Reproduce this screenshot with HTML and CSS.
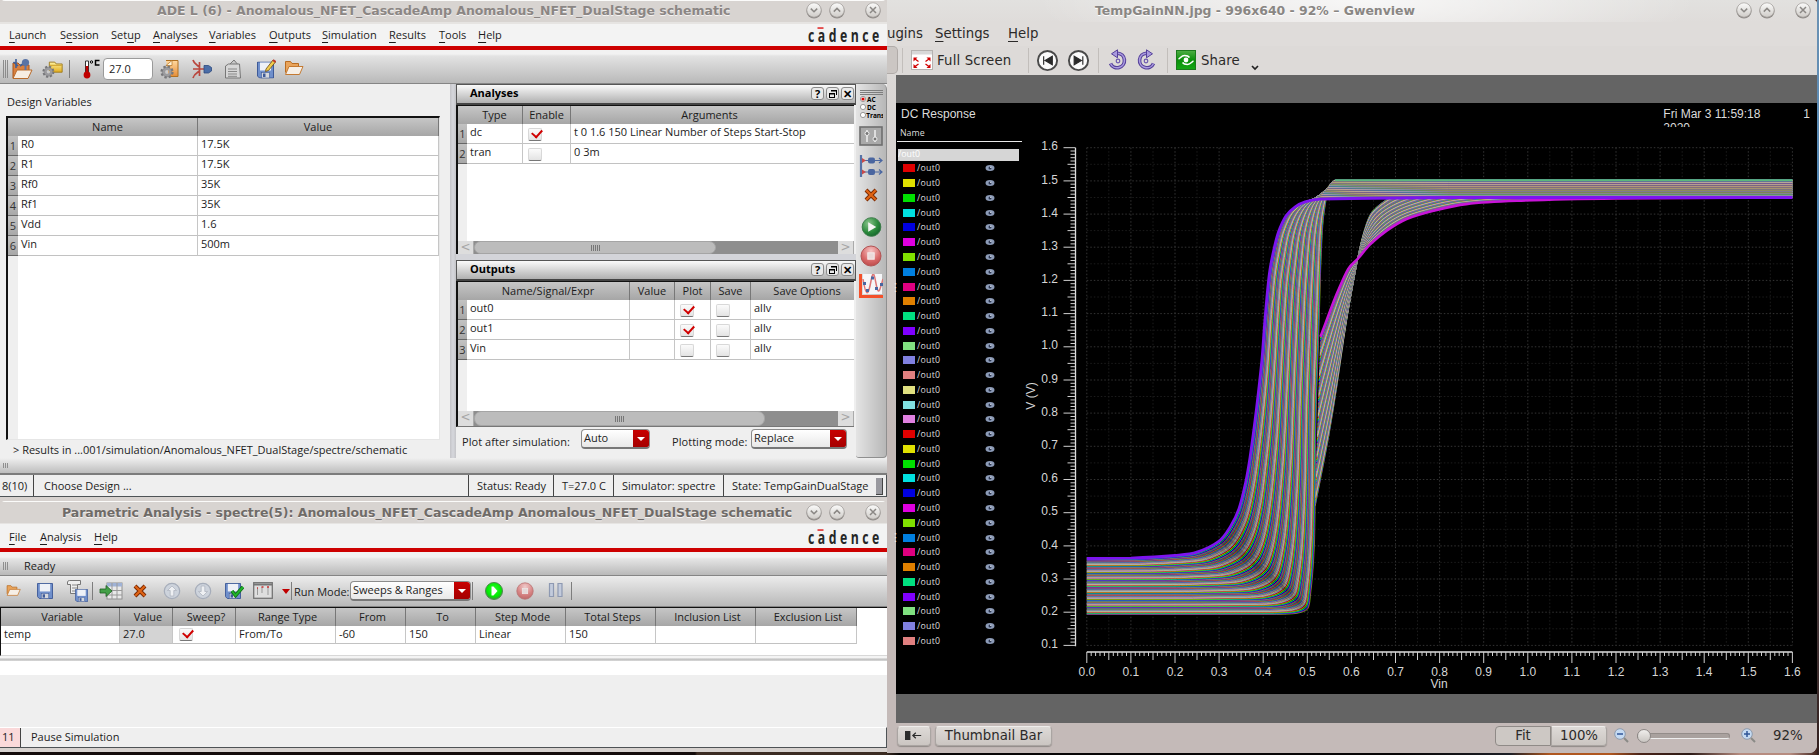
FILE: index.html
```
<!DOCTYPE html>
<html lang="en">
<head>
<meta charset="utf-8">
<title>ADE L - Virtuoso desktop</title>
<link rel="stylesheet" href="styles.css">
</head>
<body>
<svg class="defs" aria-hidden="true">
  <defs>
    <linearGradient id="gBtn" x1="0" y1="0" x2="0" y2="1"><stop offset="0" stop-color="#fbfbfa"/><stop offset="1" stop-color="#cfccc8"/></linearGradient>
    <linearGradient id="gYellow" x1="0" y1="0" x2="0" y2="1"><stop offset="0" stop-color="#fff3a0"/><stop offset="1" stop-color="#e2ac1e"/></linearGradient>
    <linearGradient id="gOrange" x1="0" y1="0" x2="0" y2="1"><stop offset="0" stop-color="#ffd9a0"/><stop offset="1" stop-color="#e58d38"/></linearGradient>
    <radialGradient id="gGreen" cx=".35" cy=".3" r=".8"><stop offset="0" stop-color="#8ac48c"/><stop offset=".6" stop-color="#2b8a3c"/><stop offset="1" stop-color="#12602a"/></radialGradient>
    <radialGradient id="gLime" cx=".5" cy=".4" r=".6"><stop offset="0" stop-color="#2cff2c"/><stop offset=".7" stop-color="#00ea00"/><stop offset="1" stop-color="#3d8f3d"/></radialGradient>
    <radialGradient id="gRed" cx=".5" cy=".25" r=".8"><stop offset="0" stop-color="#f6c5c5"/><stop offset=".6" stop-color="#d96a6a"/><stop offset="1" stop-color="#b84545"/></radialGradient>
    <linearGradient id="gShare" x1="0" y1="0" x2="0" y2="1"><stop offset="0" stop-color="#4fae45"/><stop offset=".5" stop-color="#0a8f0a"/><stop offset="1" stop-color="#15a815"/></linearGradient>
  </defs>
  <symbol id="wDown" viewBox="0 0 18 18"><circle cx="9" cy="9.8" r="7.6" fill="#8f8b88"/><circle cx="9" cy="9" r="7.2" fill="url(#gBtn)" stroke="#a29e9b" stroke-width=".7"/><path d="M5.8 7.6L9 10.8l3.200-3.200" fill="none" stroke="#8b8885" stroke-width="1.500"/></symbol>
  <symbol id="wUp" viewBox="0 0 18 18"><circle cx="9" cy="9.8" r="7.6" fill="#8f8b88"/><circle cx="9" cy="9" r="7.2" fill="url(#gBtn)" stroke="#a29e9b" stroke-width=".7"/><path d="M5.800 10.600L9 7.400l3.200 3.200" fill="none" stroke="#8b8885" stroke-width="1.500"/></symbol>
  <symbol id="wClose" viewBox="0 0 18 18"><circle cx="9" cy="9.8" r="7.6" fill="#8f8b88"/><circle cx="9" cy="9" r="7.2" fill="url(#gBtn)" stroke="#a29e9b" stroke-width=".7"/><path d="M6 6l6 6M12 6l-6 6" stroke="#8b8885" stroke-width="1.500"/></symbol>
  <symbol id="gear" viewBox="0 0 14 14"><circle cx="7" cy="7" r="5.300" fill="none" stroke="#77777a" stroke-width="2.600" stroke-dasharray="2.300 1.860"/><circle cx="7" cy="7" r="3.300" fill="none" stroke="#9b9b9e" stroke-width="2.800"/><circle cx="7" cy="7" r="4.800" fill="none" stroke="#77777a" stroke-width=".6"/></symbol>
  <symbol id="folder" viewBox="0 0 20 16"><path d="M1.500 12.500v-11h5l1.500 2h6.500v3" fill="#e9a45b" stroke="#b96c22"/><path d="M1.500 14.500L5 6.500h14l-3.500 8z" fill="#f6efe6" stroke="#c47a32"/></symbol>
  <symbol id="floppy" viewBox="0 0 17 17"><path d="M.5 .5h16v16H2.500l-2-2z" fill="#6f8fcb" stroke="#3e5a98"/><rect x="3" y="1" width="11" height="8" fill="#eef1f7"/><rect x="4.500" y="11" width="8" height="5.500" fill="#d5d8de" stroke="#3e5a98" stroke-width=".6"/><rect x="6" y="12" width="2.500" height="3.500" fill="#3e5a98"/></symbol>
  <symbol id="cross" viewBox="0 0 14 14"><path d="M2 2l10 10M12 2L2 12" stroke="#7a2800" stroke-width="4"/><path d="M2.300 2.300l9.400 9.400M11.700 2.300l-9.400 9.400" stroke="#e06414" stroke-width="2.200"/></symbol>
  <symbol id="stop" viewBox="0 0 22 22"><circle cx="11" cy="11" r="10" fill="url(#gRed)" stroke="#b15454"/><rect x="7.800" y="7.800" width="6.400" height="6.400" fill="#eadada" stroke="#f7eaea"/></symbol>
</svg>

<main class="desktop">

<!-- Gwenview image viewer -->
<section class="win viewer">
  <header class="v-title"><span class="v-caption">TempGainNN.jpg - 996x640 - 92% – Gwenview</span>
    <span class="wbtns"><svg><use href="#wDown"/></svg><svg><use href="#wUp"/></svg><svg class="last"><use href="#wClose"/></svg></span></header>
  <nav class="v-menu"><span>ugins</span><span><u>S</u>ettings</span><span><u>H</u>elp</span></nav>
  <div class="v-tools">
    <i class="v-pressed"></i><i class="v-sep"></i>
    <svg class="full" viewBox="0 0 22 20"><rect x=".5" y=".5" width="21" height="19" fill="#fff" stroke="#b5b2b0"/><rect x="1" y="1" width="20" height="3.500" fill="#d8d8d8"/><g fill="#d00000" stroke="#d00000" stroke-width="1.300"><path d="M2.500 7.500h4l-4 4zM19.500 7.500h-4l4 4zM2.500 18h4l-4-4zM19.500 18h-4l4-4z" stroke="none"/><path d="M4 9l3.500 2.500M18 9l-3.500 2.500M4 16.500L7.500 14M18 16.500L14.500 14"/></g></svg>
    <span class="t-full">Full Screen</span><i class="v-sep"></i>
    <svg class="nav1" viewBox="0 0 24 24"><circle cx="12" cy="12" r="10" fill="#fbfbfb" stroke="#4a4a4a" stroke-width="2"/><path d="M8 7.500v9M17 7.500v9L9.500 12z" fill="#2a2a2a" stroke="#2a2a2a" stroke-width="1.200"/></svg>
    <svg class="nav2" viewBox="0 0 24 24"><circle cx="12" cy="12" r="10" fill="#fbfbfb" stroke="#4a4a4a" stroke-width="2"/><path d="M16.500 7.500v9M7.500 7.500v9l7.500-4.500z" fill="#2a2a2a" stroke="#2a2a2a" stroke-width="1.200"/></svg>
    <i class="v-sep"></i>
    <svg class="rot1" viewBox="0 0 20 22"><path d="M9.500 4.200A7.300 7.300 0 1 1 2.500 14.500" fill="none" stroke="#55409a" stroke-width="3.600"/><path d="M9.500 4.200A7.300 7.300 0 1 1 2.500 14.500" fill="none" stroke="#a99ade" stroke-width="1.600"/><path d="M3.500 4.800L9.500 .8v8z" fill="#a99ade" stroke="#55409a"/><circle cx="10" cy="12" r="1.800" fill="none" stroke="#6d58b0" stroke-width="1.200"/></svg>
    <svg class="rot2" viewBox="0 0 20 22"><path d="M10.500 4.200A7.300 7.300 0 1 0 17.500 14.500" fill="none" stroke="#55409a" stroke-width="3.600"/><path d="M10.500 4.200A7.300 7.300 0 1 0 17.500 14.500" fill="none" stroke="#a99ade" stroke-width="1.600"/><path d="M16.500 4.800L10.500 .8v8z" fill="#a99ade" stroke="#55409a"/><circle cx="10" cy="12" r="1.800" fill="none" stroke="#6d58b0" stroke-width="1.200"/></svg>
    <i class="v-sep"></i>
    <svg class="share" viewBox="0 0 20 20"><rect x=".5" y=".5" width="19" height="19" fill="url(#gShare)" stroke="#1c7a1c"/><circle cx="10" cy="10" r="2.400" fill="#fff"/><path d="M2.500 9c1.500-.5 3-3.500 6-3.500 2 0 4 .5 5 2M17.500 11c-1.500.5-3 3.500-6 3.500-2 0-4-.5-5-2" fill="none" stroke="#fff" stroke-width="1.600"/></svg>
    <span class="t-share">Share</span>
    <svg class="chev" viewBox="0 0 8 6"><path d="M1 1l3 3 3-3" fill="none" stroke="#222" stroke-width="1.700"/></svg>
  </div>
  <div class="v-body">
    <i class="v-grip g1">⋮</i><i class="v-grip g2">⋮</i>
    <div class="photo">
      <div class="p-head"><span>DC Response</span><span class="p-date">Fri Mar 3 11:59:18<br>2020</span><span class="p-page">1</span></div>
      <div class="p-main">
        <div class="legend"><div class="l-name">Name</div><div class="l-sel">/out0</div><div id="rows"></div></div>
        <svg id="plot" class="plot" viewBox="1022 127 795 567"></svg>
      </div>
    </div>
  </div>
  <footer class="v-foot">
    <button class="b-side"><svg viewBox="0 0 20 10"><rect x="0" y="0" width="6" height="10" fill="#2b2b2b"/><path d="M8.500 5h9.500M12 2L8.700 5l3.300 3" fill="none" stroke="#2b2b2b" stroke-width="1.300"/></svg></button>
    <button class="b-thumb">Thumbnail Bar</button>
    <span class="b-zoom"><button class="b-fit">Fit</button><button class="b-100">100%</button></span>
    <svg class="mag" viewBox="0 0 15 15"><circle cx="6" cy="6" r="5.300" fill="#c5daf2" stroke="#8e9bad"/><path d="M3 6h6" stroke="#2f5597" stroke-width="1.500"/><path d="M10 10l4 4" stroke="#8a8a86" stroke-width="2"/></svg>
    <span class="slider"><i></i></span>
    <svg class="mag m2" viewBox="0 0 15 15"><circle cx="6" cy="6" r="5.300" fill="#c5daf2" stroke="#8e9bad"/><path d="M3 6h6M6 3v6" stroke="#2f5597" stroke-width="1.500"/><path d="M10 10l4 4" stroke="#8a8a86" stroke-width="2"/></svg>
    <span class="pct">92%</span>
  </footer>
</section>

<!-- ADE L -->
<section class="win ade">
  <header class="title"><span class="cap-ade">ADE L (6) - Anomalous_NFET_CascadeAmp Anomalous_NFET_DualStage schematic</span>
    <span class="wbtns"><svg><use href="#wDown"/></svg><svg><use href="#wUp"/></svg><svg class="last"><use href="#wClose"/></svg></span></header>
  <nav class="menu menu-ade"><span><u>L</u>aunch</span><span>S<u>e</u>ssion</span><span>Set<u>u</u>p</span><span><u>A</u>nalyses</span><span><u>V</u>ariables</span><span><u>O</u>utputs</span><span><u>S</u>imulation</span><span><u>R</u>esults</span><span><u>T</u>ools</span><span><u>H</u>elp</span><svg class="logo" viewBox="0 0 74 18"><text transform="translate(1 15.500) scale(.72 1)" textLength="99" class="logo-text">cadence</text><rect x="10.500" y="1.200" width="6" height="1.700" fill="#e23b3b"/></svg></nav>
  <div class="tools tools-ade">
    <i class="grip"></i>
    <svg viewBox="0 0 22 22"><path d="M2 20V5h5l2 2h9v6" fill="#d9803f" stroke="#a9541b"/><path d="M2 20.500L6 12h15l-4 8.500z" fill="#f7ede2" stroke="#b96c2c"/><path d="M5 1v9M2.500 4L7 8M9 8l4-3" stroke="#3d5f9a" stroke-width="1.600"/><circle cx="14.500" cy="4.500" r="3.600" fill="#5873a6"/><path d="M14.500 8v4" stroke="#5873a6" stroke-width="2"/></svg>
    <svg viewBox="0 0 24 22"><path d="M8 13V3.500h6l1.500 2H22v9H10" fill="url(#gYellow)" stroke="#9d7a1c"/><path d="M8.500 7h13" stroke="#c99a25"/><use href="#gear" x="0" y="7" width="14" height="14"/></svg>
    <i class="sep"></i>
    <svg viewBox="0 0 20 20"><path d="M4.500 2h3v12h-3z" fill="#fff" stroke="#333"/><path d="M6 7v8" stroke="#c00000" stroke-width="2.500"/><circle cx="6" cy="16" r="3.400" fill="#c00000"/><circle cx="10.500" cy="3" r="1.200" fill="none" stroke="#000"/><path d="M18.500 1.500h-4v4.500h4" fill="none" stroke="#000" stroke-width="1.500"/></svg>
    <span class="temp-in">27.0</span>
    <svg viewBox="0 0 20 22"><path d="M6 2.500h12v16H9" fill="url(#gOrange)" stroke="#b07020"/><path d="M12 2.500v5H6z" fill="#fff4dc" stroke="#b07020" stroke-width=".7"/><use href="#gear" x="0" y="7" width="14" height="14"/></svg>
    <svg viewBox="0 0 20 20"><path d="M1 1c1 4 4 5 6.500 7v4C5 14 2 15 1 19M1 10h6M7.500 3v14M7.500 10h5" fill="none" stroke="#b9473e" stroke-width="1.700"/><path d="M12 6.500h4.500l3 2v3.500l-3 2H12z" fill="#4b6ea8" stroke="#2d4a7d" stroke-width=".8"/></svg>
    <svg viewBox="0 0 18 20"><path d="M4 7L10 1l5 6" fill="#c8c8c8" stroke="#777"/><path d="M1.500 19V7l3-2h11l1 14z" fill="#d6d6d6" stroke="#777"/><path d="M4 10h9M4 12.500h9M4 15h9M4 17.300h9" stroke="#888"/></svg>
    <svg viewBox="0 0 20 20"><use href="#floppy" x="1" y="2.500" width="17" height="17"/><path d="M10 10L17 1l2.500 2-7 8.500-3 1z" fill="#f1cb4c" stroke="#6b4a12" stroke-width=".8"/><path d="M17 1l2.500 2" stroke="#c0392b" stroke-width="2"/></svg>
    <svg viewBox="0 0 20 18"><use href="#folder" width="20" height="16"/></svg>
  </div>
  <div class="work">
    <div class="vars">
      <div class="lbl">Design Variables</div>
      <div class="grid g-vars">
        <div class="hd"><b></b><b>Name</b><b>Value</b></div>
        <div class="rw"><em>1</em><span>R0</span><span>17.5K</span></div>
        <div class="rw"><em>2</em><span>R1</span><span>17.5K</span></div>
        <div class="rw"><em>3</em><span>Rf0</span><span>35K</span></div>
        <div class="rw"><em>4</em><span>Rf1</span><span>35K</span></div>
        <div class="rw"><em>5</em><span>Vdd</span><span>1.6</span></div>
        <div class="rw"><em>6</em><span>Vin</span><span>500m</span></div>
      </div>
      <div class="results">&gt; Results in ...001/simulation/Anomalous_NFET_DualStage/spectre/schematic</div>
    </div>
    <div class="vsplit"></div>
    <div class="docks">
      <div class="dock-t"><span>Analyses</span><i>?</i><i class="fl"></i><i>✕</i></div>
      <div class="grid g-an">
        <div class="hd"><b></b><b>Type</b><b>Enable</b><b>Arguments</b></div>
        <div class="rw"><em>1</em><span>dc</span><span class="ck on"></span><span class="args">t 0 1.6 150 Linear Number of Steps Start-Stop</span></div>
        <div class="rw"><em>2</em><span>tran</span><span class="ck"></span><span>0 3m</span></div>
      </div>
      <div class="scroll"><i class="ar">&lt;</i><div class="trk"><div class="th th1"><i></i></div></div><i class="ar">&gt;</i></div>
      <div class="hsplit"></div>
      <div class="dock-t"><span>Outputs</span><i>?</i><i class="fl"></i><i>✕</i></div>
      <div class="grid g-out">
        <div class="hd"><b></b><b>Name/Signal/Expr</b><b>Value</b><b>Plot</b><b>Save</b><b>Save Options</b></div>
        <div class="rw"><em>1</em><span>out0</span><span></span><span class="ck on"></span><span class="ck"></span><span>allv</span></div>
        <div class="rw"><em>2</em><span>out1</span><span></span><span class="ck on"></span><span class="ck"></span><span>allv</span></div>
        <div class="rw"><em>3</em><span>Vin</span><span></span><span class="ck"></span><span class="ck"></span><span>allv</span></div>
      </div>
      <div class="scroll s2"><i class="ar">&lt;</i><div class="trk"><div class="th th2"><i></i></div></div><i class="ar">&gt;</i></div>
      <div class="modes"><span class="m1">Plot after simulation:</span><span class="sel s-auto">Auto<i></i></span><span class="m2l">Plotting mode:</span><span class="sel s-rep">Replace<i></i></span></div>
    </div>
    <aside class="side">
      <i class="hgrip"></i>
      <svg class="i-acdc" viewBox="0 0 24 24"><g fill="#fff" stroke="#999"><circle cx="4" cy="4" r="2.600"/><circle cx="4" cy="12" r="2.600"/><circle cx="4" cy="20" r="2.600"/></g><circle cx="4" cy="4" r="1.600" fill="#d00"/><g class="tiny"><text x="8" y="6.500">AC</text><text x="8" y="14.500">DC</text><text x="7.200" y="22.500">Trans</text></g></svg>
      <svg class="i-sld" viewBox="0 0 24 20"><rect x="1" y="1" width="22" height="18" fill="#a9a9a9" stroke="#6e6e6e" stroke-width="1.600"/><path d="M8 4v12M16 4v12" stroke="#eee" stroke-width="1.500"/><circle cx="8" cy="7.500" r="2" fill="#777" stroke="#eee"/><circle cx="16" cy="13" r="2" fill="#777" stroke="#eee"/></svg>
      <svg class="i-net" viewBox="0 0 24 24"><path d="M2 1v22" stroke="#5872a6" stroke-width="2.200"/><path d="M3 6.500h20M3 18h20M20 4l3 2.500L20 9M20 15.500l3 2.500-3 2.500" fill="none" stroke="#4a66a0" stroke-width="1.200"/><rect x="9" y="3.500" width="7" height="6" rx="2" fill="#4a66a0"/><rect x="9" y="15" width="7" height="6" rx="2" fill="#4a66a0"/><path d="M3 4l4 2.500L3 9zM3 15.500L7 18l-4 2.500z" fill="#c94a4a"/></svg>
      <svg class="i-x"><use href="#cross"/></svg>
      <svg class="i-go" viewBox="0 0 22 22"><circle cx="11" cy="11" r="9.800" fill="url(#gGreen)" stroke="#3b7b48"/><path d="M7.500 6v10l8.500-5z" fill="#f4f4f4"/></svg>
      <svg class="i-stop"><use href="#stop"/></svg>
      <svg class="i-plot" viewBox="0 0 24 24"><path d="M4 0h19v20H4z" fill="#f6f6f8"/><path d="M1.500 0v22.500H24" fill="none" stroke="#f4502a" stroke-width="3"/><path d="M4 5c3 18 5 18 8 2s4 0 6 7 3 1 6-9" fill="none" stroke="#dd7676" stroke-width="1.500"/><g fill="#4a66a0"><rect x="4" y="8" width="3" height="3"/><rect x="7" y="15" width="3" height="3"/><rect x="12" y="2.500" width="3" height="3"/><rect x="16" y="13" width="3" height="3"/><rect x="21" y="9" width="3" height="3"/></g></svg>
    </aside>
  </div>
  <div class="strip"><i></i></div>
  <footer class="status st-ade"><span>8(10)</span><span>Choose Design ...</span><span>Status: Ready</span><span>T=27.0 C</span><span>Simulator: spectre</span><span>State: TempGainDualStage</span><i></i></footer>
</section>

<!-- Parametric analysis -->
<section class="win param">
  <header class="title"><span class="cap-par">Parametric Analysis - spectre(5): Anomalous_NFET_CascadeAmp Anomalous_NFET_DualStage schematic</span>
    <span class="wbtns"><svg><use href="#wDown"/></svg><svg><use href="#wUp"/></svg><svg class="last"><use href="#wClose"/></svg></span></header>
  <nav class="menu menu-par"><span><u>F</u>ile</span><span><u>A</u>nalysis</span><span><u>H</u>elp</span><svg class="logo" viewBox="0 0 74 18"><text transform="translate(1 15.500) scale(.72 1)" textLength="99" class="logo-text">cadence</text><rect x="10.500" y="1.200" width="6" height="1.700" fill="#e23b3b"/></svg></nav>
  <div class="ready"><i></i>Ready</div>
  <div class="tools tools-par">
    <svg viewBox="0 0 20 20"><use href="#folder" x="2" y="3" width="15" height="13"/></svg>
    <svg viewBox="0 0 20 20"><use href="#floppy" x="2" y="2" width="16" height="16"/></svg>
    <svg class="wide" viewBox="0 0 24 24"><path d="M2.500 3a2 2 0 0 1 2-1.500h11v4h-3v9h-7v-9h-3z" fill="#eee" stroke="#777"/><path d="M7 6h5M7 9h5M7 12h4" stroke="#888"/><use href="#floppy" x="10" y="10" width="13" height="13"/></svg>
    <i class="sep"></i>
    <svg class="wide" viewBox="0 0 24 20"><rect x="8" y="2" width="15" height="16" fill="#e9e9e9" stroke="#8f8f8f"/><rect x="8" y="2" width="15" height="3.500" fill="#9fb2d6"/><path d="M8 9.500h15M8 14h15M13 2v16M18 2v16" stroke="#999"/><path d="M1 8h6V4.500l6 5.500-6 5.500V12H1z" fill="#43a047" stroke="#1d5e22" stroke-width=".8"/></svg>
    <svg viewBox="0 0 20 20"><use href="#cross" x="3" y="3" width="14" height="14"/></svg>
    <svg viewBox="0 0 20 20"><circle cx="10" cy="10" r="7.700" fill="#cdd3dc" stroke="#a6adba" stroke-width="1.200"/><path d="M10 5l4.500 4.500h-2.700V15H8.200V9.500H5.500z" fill="#eef0f3" stroke="#aab0bb" stroke-width=".7"/></svg>
    <svg viewBox="0 0 20 20"><circle cx="10" cy="10" r="7.700" fill="#cdd3dc" stroke="#a6adba" stroke-width="1.200"/><path d="M10 15l4.500-4.500h-2.700V5H8.200v5.500H5.500z" fill="#eef0f3" stroke="#aab0bb" stroke-width=".7"/></svg>
    <svg viewBox="0 0 20 20"><use href="#floppy" x="1" y="2" width="16" height="16"/><path d="M8 10l3.500 4.500L19 6" fill="none" stroke="#0e6a12" stroke-width="3.600"/><path d="M8 10l3.500 4.500L19 6" fill="none" stroke="#21b32a" stroke-width="2"/></svg>
    <svg viewBox="0 0 20 20"><rect x=".7" y="1.700" width="18.600" height="15.600" fill="#dedede" stroke="#757575" stroke-width="1.300"/><path d="M1 3.500h18" stroke="#757575" stroke-width="2"/><path d="M4.500 7v7M9 6v6M15 6v8" stroke="#999"/><path d="M4 7h1M8.500 6h2M14 6h2" stroke="#c33" stroke-width="1.300"/></svg>
    <svg class="dd" viewBox="0 0 8 5"><path d="M0 0h8L4 5z" fill="#c00000"/></svg>
    <i class="sep"></i>
    <span class="rm">Run Mode:</span><span class="sel s-run">Sweeps &amp; Ranges<i></i></span>
    <i class="sep"></i>
    <svg viewBox="0 0 20 20"><circle cx="10" cy="10" r="8.500" fill="url(#gLime)" stroke="#4d8a4d"/><path d="M7.500 5.500h2l4 4.500-4 4.500h-2z" fill="#fff"/></svg>
    <svg class="fade" viewBox="0 0 20 20"><use href="#stop" x="1" y="1" width="18" height="18"/></svg>
    <svg viewBox="0 0 20 20"><path d="M3.500 2.500h4v13h-4zM12 2.500h4v13h-4z" fill="#c3cbdc" stroke="#8e99b2" stroke-width="1.200"/></svg>
    <i class="sep"></i>
  </div>
  <div class="grid g-par">
    <div class="hd"><b>Variable</b><b>Value</b><b>Sweep?</b><b>Range Type</b><b>From</b><b>To</b><b>Step Mode</b><b>Total Steps</b><b>Inclusion List</b><b>Exclusion List</b></div>
    <div class="rw"><span>temp</span><span class="dim">27.0</span><span class="ck on"></span><span>From/To</span><span>-60</span><span>150</span><span>Linear</span><span>150</span><span></span><span></span></div>
  </div>
  <div class="psplit"></div>
  <div class="plog"></div>
  <footer class="status st-par"><span>11</span><span>Pause Simulation</span></footer>
</section>
</main>
<script src="app.js"></script>
</body>
</html>
```
FILE: styles.css
```
* { box-sizing: border-box; }
body { margin: 0; width: 1819px; height: 755px; overflow: hidden; background: #16100f; font: 11px "Open Sans", "Noto Sans", sans-serif; color: #1c1c1c; }
u { text-decoration: underline; text-underline-offset: 2.500px; text-decoration-thickness: 1px; }
i, em { font-style: normal; }
.defs { position: absolute; width: 0; height: 0; }
.desktop { position: relative; width: 1819px; height: 755px; overflow: hidden; background: linear-gradient(90deg, #130b0a 0 695px, #3b2b22 697px 886px, #070505 900px 1400px, #1d1f26 1510px, #b0571f 1550px 1610px, #4a2318 1640px, #2c1a16 1690px, #b78c80 1740px 1790px, #3a1f1a 1819px); }
.desktop::after { content: ""; position: absolute; right: 0; top: 0; width: 2px; height: 755px; background: linear-gradient(#6d93b4, #4580b4 35%, #554a50 65%, #33201e); }
.win { position: absolute; display: flex; flex-direction: column; }
.ade { left: 0; top: 0; width: 887px; height: 501px; background: #d7d2cf; }
.param { left: 0; top: 501px; width: 887px; height: 251px; background: #d7d2cf; }
.viewer { left: 887px; top: 0; width: 930px; height: 753px; background: #dedbd9; font: 13.300px "DejaVu Sans", sans-serif; border-radius: 0 4px 8px 0; overflow: hidden; }

/* title bars */
.title { flex: none; display: flex; height: 24px; padding-top: 1px; background: linear-gradient(#fbfbfa 0 1px, #d8d4d1 1px 22px, #e6e4e2 22px); font: bold 12.500px "DejaVu Sans", sans-serif; color: #8b8684; text-shadow: 0 1px 0 #f5f3f2; border-radius: 5px 5px 0 0; white-space: nowrap; }
.param .title { color: #6f6b68; }
.cap-ade { margin-left: 157px; line-height: 20px; letter-spacing: -.02px; }
.cap-par { margin-left: 62px; line-height: 21px; letter-spacing: -.02px; }
.wbtns { display: flex; margin-left: auto; }
.wbtns svg { width: 18px; height: 18px; margin-right: 5px; margin-top: 0; }
.wbtns .last { margin-left: 13px; margin-right: 5px; }
.param .wbtns svg { margin-top: 1px; }

/* cadence menus */
.menu { flex: none; display: flex; height: 26px; background: #f3f3f3; border-bottom: 4px solid #cd0000; line-height: 22px; }
.menu .logo { width: 74px; height: 18px; margin: 2px 6px 0 auto; overflow: visible; }
.logo-text { font: 700 17px "Open Sans", sans-serif; fill: #262626; }
.menu-ade { padding-left: 9px; }
.menu-ade span:nth-child(1) { width: 51px; } .menu-ade span:nth-child(2) { width: 51px; }
.menu-ade span:nth-child(3) { width: 42px; } .menu-ade span:nth-child(4) { width: 56px; }
.menu-ade span:nth-child(5) { width: 60px; } .menu-ade span:nth-child(6) { width: 53px; }
.menu-ade span:nth-child(7) { width: 67px; } .menu-ade span:nth-child(8) { width: 50px; }
.menu-ade span:nth-child(9) { width: 39px; }
.menu-par { padding-left: 9px; height: 28px; line-height: 25px; }
.param .title { height: 23px; }
.menu-par span:nth-child(1) { width: 31px; } .menu-par span:nth-child(2) { width: 54px; }
.menu-par .logo { margin-top: 4px; }

/* tool strips */
.tools { flex: none; display: grid; align-items: center; background: linear-gradient(#ececec, #b9b9b9); border-bottom: 1px solid #858585; }
.tools svg { width: 22px; height: 22px; justify-self: center; }
.sep { display: block; width: 1px; height: 18px; background: #7d7d7d; }
.tools-ade { height: 34px; padding-top: 4px; grid-template-columns: 8px 28px 33px 8px 27px 50px 31px 33px 29px 37px 20px; background: linear-gradient(#f2f2f2 0 4px, #e3e3e3 6px, #b9b9b9); }
.tools-ade svg:nth-of-type(3) { width: 20px; height: 20px; }
.tools-ade svg:nth-of-type(n+5) { width: 20px; height: 20px; }
.grip { width: 6px; height: 18px; margin-left: 3px; background: repeating-linear-gradient(90deg, #8c8c8c 0 1px, transparent 1px 2px); }
.temp-in { height: 22px; margin: 0 1px 0 -1px; padding-left: 5px; line-height: 20px; background: #fff; border: 1px solid #9a9a9a; border-radius: 4px; }

.work { flex: none; display: flex; height: 374px; background: #efefef; }
.vars { width: 450px; padding-left: 6px; }
.lbl { height: 32px; padding: 9px 0 0 1px; line-height: 18px; }

/* tables */
.grid { background: #fff; border-top: 2px solid #111; }
.hd, .rw { display: grid; }
.hd { background: linear-gradient(#c6c6c6, #a6a6a6); }
.hd b { font-weight: normal; text-align: center; line-height: 18px; height: 18px; white-space: nowrap; }
.hd b + b { border-right: 1px solid #777; }
.rw span { height: 20px; line-height: 15px; padding-left: 3px; border-right: 1px solid #c6c6c6; border-bottom: 1px solid #c2c2c2; white-space: nowrap; }
.rw em { height: 20px; padding-top: 1px; line-height: 18px; text-align: center; background: linear-gradient(#c2c2c2, #a8a8a8); border-bottom: 1px solid #666; color: #333; }
.g-vars { width: 434px; height: 324px; border-left: 2px solid #111; background: linear-gradient(90deg, #efefef 10px, #fff 10px); border-right: 1px solid #e6e6e6; border-bottom: 1px solid #e6e6e6; }
.g-vars .hd, .g-vars .rw { width: 431px; grid-template-columns: 10px 180px 241px; }
.results { padding: 2px 0 0 7px; line-height: 15px; white-space: nowrap; }
.vsplit { width: 6px; background: linear-gradient(90deg, #c4c4c8, #d3d4d9 40%, #d3d4d9 60%, #c4c4c8); }
.docks { width: 400px; }
.dock-t { display: flex; height: 21px; padding: 0 1px 0 13px; border: 1px solid #555; border-bottom: 2px solid #444; background: linear-gradient(#fafafa, #b0b0b0); font-weight: bold; line-height: 15px; color: #000; gap: 2px; }
.dock-t span { margin-right: auto; }
.dock-t i { width: 13px; height: 13px; margin-top: 2px; border: 1px solid #8a8a8a; border-radius: 3px; background: #e9e9e9; font-size: 11px; line-height: 11px; text-align: center; }
.dock-t .fl { background: linear-gradient(#000, #000) 4px 2px/6px 1.500px no-repeat, linear-gradient(#000, #000) 2px 5px/6px 1.500px no-repeat, linear-gradient(#000, #000) 9px 2px/1px 5px no-repeat, linear-gradient(#000, #000) 2px 5px/1px 5px no-repeat, linear-gradient(#000, #000) 7px 5px/1px 5px no-repeat, linear-gradient(#000, #000) 2px 9px/6px 1px no-repeat, #e9e9e9; }
.g-an, .g-out { border-left: 2px solid #111; border-top-width: 1px; margin-right: 2px; background: linear-gradient(90deg, #efefef 9px, #fff 9px); overflow: hidden; }
.g-an { height: 136px; }
.g-out { height: 130px; }
.g-an .hd, .g-an .rw { width: 396px; grid-template-columns: 9px 56px 48px 283px; }
.g-out .hd, .g-out .rw { width: 396px; grid-template-columns: 9px 163px 45px 36px 40px 103px; }
.g-an .hd b:last-child, .g-out .hd b:last-child, .g-an .rw span:last-child, .g-out .rw span:last-child { border-right: 0; }
.g-an .hd b:last-child { padding-right: 6px; }
.g-out .hd b:last-child { padding-left: 9px; }
.rw .ck { display: flex; padding: 4px 0 0 5px; }
.ck::before { content: ""; width: 12px; height: 11px; background: linear-gradient(#fbfbfb, #e3e3e3); border: 1px solid #d8d8d8; border-bottom: 1.500px solid #777; border-radius: 2px; }
.ck.on::after { content: ""; width: 8px; height: 5px; margin: 1px 0 0 -10px; border-left: 2px solid #d00000; border-bottom: 2px solid #d00000; transform: rotate(-48deg); }
.scroll { display: flex; height: 13px; margin: 0 2px 0 0; border-left: 2px solid #111; background: #8e8e8e; }
.s2 { height: 16px; border-bottom: 1px solid #777; }
.ar { width: 16px; background: #ddd; color: #a6a6a6; font: 12px/13px "DejaVu Sans", sans-serif; text-align: center; border-right: 1px solid #aaa; }
.trk { flex: 1; }
.th { display: flex; align-items: center; justify-content: center; height: 100%; border-radius: 7px; background: #bcbcbc; border: 1px solid #a5a5a5; }
.th i { width: 9px; height: 6px; background: repeating-linear-gradient(90deg, #777 0 1px, transparent 1px 2px); }
.th1 { width: 242px; } .th2 { width: 291px; }
.hsplit { height: 6px; background: #d3d4d9; }
.modes { display: flex; padding-left: 6px; height: 31px; align-items: flex-start; white-space: nowrap; }
.m1 { width: 119px; padding-top: 7px; letter-spacing: .05px; } .m2l { width: 79px; padding-top: 7px; margin-left: 22px; letter-spacing: .05px; }
.sel { display: flex; justify-content: space-between; height: 20px; margin-top: 2px; padding-left: 2px; line-height: 16px; border: 1px solid #8c8c8c; border-bottom: 2px solid #777; border-radius: 4px; background: linear-gradient(#fff, #e8e8e8); overflow: hidden; white-space: nowrap; }
.sel i { width: 16px; background: linear-gradient(#c80000, #a50000); display: flex; align-items: center; justify-content: center; }
.sel i::before { content: ""; border: 4px solid transparent; border-top-color: #fff; border-bottom: 0; }
.s-auto { width: 69px; } .s-rep { width: 96px; }
.side { width: 31px; height: 374px; display: flex; flex-direction: column; align-items: center; background: linear-gradient(90deg, #e4e4e4, #b7b7b7); border: 1px solid #8f8f8f; border-top: 0; border-left: 0; border-radius: 0 5px 4px 3px; }
.side svg { flex: none; width: 24px; height: 24px; margin-top: 5px; }
.hgrip { width: 23px; height: 5px; margin-top: 6px; background: repeating-linear-gradient(#7e7e7e 0 1px, transparent 1px 2px); }
.side .i-acdc { margin-top: 0; }
.side .i-sld { height: 20px; margin-top: 7px; }
.side .i-net { margin-top: 8px; }
.side .i-x { width: 14px; height: 14px; margin-top: 10px; }
.side .i-go { width: 21px; height: 22px; margin-top: 14px; }
.side .i-stop { width: 22px; height: 22px; margin-top: 7px; }
.side .i-plot { margin-top: 7px; }
.tiny { font: bold 6.500px "Open Sans", sans-serif; fill: #000; }
.strip { flex: none; height: 17px; padding: 5px 0 0 3px; background: linear-gradient(#efefef, #bdbdbd); border-bottom: 2px solid #7c7c7c; }
.strip i { display: block; width: 5px; height: 5px; background: repeating-linear-gradient(90deg, #8f8f8f 0 1px, transparent 1px 2px); }
.status { flex: none; display: flex; height: 22px; background: #efefef; border-bottom: 1px solid #4e5356; border-right: 1px solid #4e5356; line-height: 21px; white-space: nowrap; }
.status span { border-left: 1px solid #444; padding-left: 8px; }
.status span:first-child { border-left: 0; padding-left: 2px; }
.st-ade span:nth-child(1) { width: 33px; } .st-ade span:nth-child(2) { width: 435px; padding-left: 10px; }
.st-ade span:nth-child(3) { width: 85px; } .st-ade span:nth-child(4) { width: 60px; }
.st-ade span:nth-child(5) { width: 110px; } .st-ade span:nth-child(6) { width: 153px; }
.st-ade i { width: 7px; height: 17px; margin-top: 3px; background: #99999f; border-right: 1px solid #444; border-bottom: 1px solid #444; }

/* parametric window */
.ready { flex: none; display: flex; height: 24px; padding-top: 5px; line-height: 17px; background: linear-gradient(#f2f2f2 0 5px, #e4e4e4 7px, #b9b9b9); border-bottom: 1px solid #858585; }
.ready i { width: 5px; height: 8px; margin: 5px 16px 0 3px; background: repeating-linear-gradient(90deg, #8f8f8f 0 1px, transparent 1px 2px); }
.tools-par { height: 31px; grid-template-columns: 28px 34px 30px 6px 25px 34px 30px 32px 30px 28px 14px 3px 56px 122px 8px 28px 33px 30px 4px; }
.tools-par svg { width: 20px; height: 20px; }
.tools-par .wide { width: 24px; height: 24px; }
.tools-par .dd { width: 8px; height: 5px; margin-left: 4px; }
.tools-par .fade { opacity: .75; }
.rm { white-space: nowrap; }
.s-run { width: 121px; margin-top: 0; }
.g-par { flex: none; height: 49px; border-top-width: 1px; border-left: 1px solid #111; background: #fff; border-bottom: 1px solid #d8d8d8; }
.g-par .hd, .g-par .rw { width: 856px; grid-template-columns: 119px 53px 63px 100px 70px 70px 90px 90px 100px 101px; }
.g-par .hd b { border-right: 1px solid #777; padding-left: 4px; }
.g-par .rw span { height: 18px; line-height: 16px; }
.g-par .rw .ck { padding: 2px 0 0 6px; }
.g-par .dim { background: #d4d4d4; }
.psplit { flex: none; height: 5px; background: linear-gradient(#f4f4f4 0 2px, #bdbdbd 3px, #d8d8d8); }
.plog { flex: none; height: 66px; background: linear-gradient(#fff 0 14px, #efefef 14px); }
.st-par { border-top: 1px solid #fff; height: 21px; line-height: 18px; }
.st-par span:first-child { width: 20px; background: #fad9da; padding-left: 2px; }
.st-par span:nth-child(2) { padding-left: 10px; }

/* image viewer */
.v-title { flex: none; display: flex; height: 22px; padding-top: 1px; background: radial-gradient(ellipse 330px 70px at 480px 0, rgba(255,255,255,.75), rgba(255,255,255,0)) no-repeat, linear-gradient(#e2e1df, #dfdcda); }
.v-caption { margin-left: 208px; font: bold 12.450px/20px "DejaVu Sans", sans-serif; color: #898683; text-shadow: 0 1px 0 #fff; white-space: nowrap; }
.v-menu { flex: none; display: flex; height: 24px; line-height: 23px; color: #2c2a29; background: #dfdcda; }
.v-menu span:nth-child(1) { width: 48px; margin-left: 0; } .v-menu span:nth-child(2) { width: 73px; }
.v-tools { flex: none; display: flex; height: 29px; padding-bottom: 1px; align-items: center; color: #2c2a29; background: #dddad8; white-space: nowrap; }
.v-pressed { width: 11px; height: 28px; margin-right: 4px; background: #cbc6c3; border: 1px solid #b0aba8; border-left: 0; border-radius: 0 5px 5px 0; }
.v-sep { width: 1px; height: 25px; background: #c2bebb; }
.v-tools .full { width: 22px; height: 20px; margin-left: 8px; }
.t-full { width: 91px; margin-left: 4px; letter-spacing: .15px; }
.nav1, .nav2 { width: 23px; height: 23px; margin-left: 7px; } .nav2 { margin-left: 8px; margin-right: 8px; }
.rot1, .rot2 { width: 20px; height: 22px; margin-left: 9px; } .rot2 { margin-left: 8px; margin-right: 11px; }
.v-tools .share { width: 20px; height: 20px; margin-left: 8px; }
.t-share { margin-left: 5px; width: 50px; letter-spacing: .1px; }
.chev { width: 8px; height: 6px; margin-top: 16px; }
.v-body { flex: none; position: relative; height: 648px; padding: 28px 0 29px 9px; background: linear-gradient(90deg, transparent 9px, #646464 9px), linear-gradient(#dcd9d7, #c4bab8 55%); }
.v-grip { position: absolute; left: 3px; font: 11px/12px "DejaVu Sans", sans-serif; color: #f2efed; }
.g1 { top: 207px; } .g2 { top: 457px; }
.photo { height: 591px; background: #000; color: #dcdcdc; font-family: "Liberation Sans", sans-serif; }
.p-head { display: flex; height: 24px; padding: 4px 7px 0 5px; overflow: hidden; font-size: 12px; line-height: 14px; }
.p-date { width: 140px; margin-left: auto; }
.p-main { display: flex; }
.legend { width: 126px; padding-left: 1px; font: 8.800px "Open Sans", sans-serif; }
.l-name { width: 125px; height: 15px; padding-left: 3px; line-height: 12px; border-bottom: 1px solid #e8e8e8; }
.l-sel { width: 121px; height: 12px; margin: 7px 0 0 1px; background: #d6d6d6; color: #fff; line-height: 11px; overflow: hidden; }
.l-row { display: flex; align-items: center; height: 14.780px; padding-left: 6px; }
.l-row i { width: 12px; height: 8px; margin-right: 2px; }
.l-row span { width: 68px; letter-spacing: .25px; line-height: 12px; }
.l-row svg { width: 10px; height: 8px; }
.plot { width: 795px; height: 567px; font: 12px "Liberation Sans", sans-serif; fill: #d6d6d6; }
.v-foot { flex: none; display: flex; height: 30px; align-items: center; padding: 0 13px 5px 10px; background: #c4bab8; color: #2c2a29; font-size: 13.300px; }
.v-foot button { height: 20px; padding: 0; border: 1px solid #aaa5a2; border-top-color: #efedeb; border-radius: 4px; background: linear-gradient(#dedad7, #cbc6c2); box-shadow: 0 1px 1px #918b88; font: inherit; color: inherit; line-height: 17px; }
.v-foot .b-side { width: 34px; margin-right: 4px; } .b-side svg { width: 18px; height: 9px; }
.v-foot .b-thumb { width: 117px; }
.b-zoom { display: flex; margin-left: auto; }
.v-foot .b-fit { width: 56px; border-radius: 4px 0 0 4px; background: #cdc8c4; border-color: #8f8a87; box-shadow: none; }
.v-foot .b-100 { width: 56px; border-radius: 0 4px 4px 0; }
.mag { width: 15px; height: 15px; margin-left: 7px; }
.slider { width: 93px; height: 6px; margin: 0 11px 0 8px; border-radius: 3px; background: #a9a19e; border: 1px solid #938c89; border-bottom-color: #eee; }
.slider i { display: block; width: 14px; height: 14px; margin: -5px 0 0 -1px; border-radius: 50%; background: linear-gradient(#f0eeec, #c9c5c1); border: 1px solid #8d8886; }
.m2 { margin-left: 0; }
.pct { width: 31px; margin-left: 17px; white-space: nowrap; }
```
FILE: app.js
```
// Trace palette, repeated over the sweep
const COLORS = ['#e00000', '#e0e000', '#00e000', '#00e0e0', '#0000e0', '#e000e0', '#80e000', '#0080e0', '#e00080',
  '#e08000', '#00e080', '#8000ff', '#80e080', '#8080e0', '#e08080', '#e0e080', '#80e0e0', '#e080e0'];

document.getElementById('rows').innerHTML = Array.from({ length: 33 }, (_, i) =>
  `<div class="l-row"><i style="background:${COLORS[i % 18]}"></i><span>/out0</span>` +
  '<svg viewBox="0 0 10 8"><ellipse cx="5" cy="4" rx="4.500" ry="2.900" fill="#8d9cb8"/><circle cx="5" cy="4" r="1.500" fill="#2b3550"/><circle cx="5.800" cy="3.300" r=".8" fill="#dfe6f2"/></svg></div>').join('');

const X = v => 1086.8 + v * 441;
const Y = v => 645.4 - (v - 0.1) * 331.8;
let out = '';
const line = (x1, y1, x2, y2, c, w, extra = '') =>
  `<line x1="${x1.toFixed(1)}" y1="${y1.toFixed(1)}" x2="${x2.toFixed(1)}" y2="${y2.toFixed(1)}" stroke="${c}" stroke-width="${w}" ${extra}/>`;

// Dotted grid
for (let i = 0; i <= 32; i++) out += line(X(i * .05), Y(1.6), X(i * .05), Y(.1), i % 2 ? '#1c1c1c' : '#343434', 1, 'stroke-dasharray="1.5 2"');
for (let i = 2; i <= 32; i++) out += line(X(0), Y(i * .05), X(1.6), Y(i * .05), i % 2 ? '#1c1c1c' : '#343434', 1, 'stroke-dasharray="1.5 2"');

// Boundary traces; the sweep is interpolated between each pair
const coldFirst = [[0, .362], [.1, .363], [.2, .371], [.25, .381], [.3, .414], [.325, .456], [.345, .511], [.36, .59], [.37, .666], [.385, .816], [.397, .96], [.4045, 1.09], [.414, 1.22], [.423, 1.285], [.4345, 1.345], [.452, 1.395], [.4725, 1.422], [.495, 1.437], [.529, 1.445], [.6, 1.447], [.82, 1.45], [1.6, 1.45]];
const hotFirst = [[0, .193], [.3, .193], [.43, .193], [.465, .195], [.4875, .2], [.5025, .213], [.508, .26], [.513, .33], [.5165, .42], [.518, .55], [.52, .8], [.525, 1], [.5285, 1.15], [.53, 1.22], [.533, 1.32], [.536, 1.38], [.541, 1.43], [.545, 1.455], [.563, 1.503], [.62, 1.503], [.82, 1.503], [1.6, 1.503]];
const coldSecond = [[.53, 1.03], [.548, 1.095], [.567, 1.16], [.593, 1.235], [.615, 1.266], [.642, 1.308], [.68, 1.35], [.725, 1.385], [.786, 1.41], [.86, 1.43], [.975, 1.44], [1.2, 1.447], [1.6, 1.45]];
const hotSecond = [[.518, .52], [.548, .726], [.567, .88], [.588, 1.07], [.615, 1.27], [.627, 1.34], [.643, 1.4], [.665, 1.43], [.69, 1.452], [.72, 1.47], [.8, 1.5], [1, 1.503], [1.6, 1.503]];

const smooth = pts => {
  let d = `M${pts[0][0].toFixed(1)} ${pts[0][1].toFixed(1)}`;
  for (let i = 0; i < pts.length - 1; i++) {
    const a = pts[Math.max(0, i - 1)], b = pts[i], c = pts[i + 1], e = pts[Math.min(pts.length - 1, i + 2)];
    if (Math.abs(c[1] - b[1]) < 1) {
      d += `L${c[0].toFixed(1)} ${c[1].toFixed(1)}`;
      continue;
    }
    const h = Math.hypot(c[0] - b[0], c[1] - b[1]);
    const u = [c[0] - a[0], c[1] - a[1]], v = [e[0] - b[0], e[1] - b[1]];
    const nu = Math.hypot(...u) || 1, nv = Math.hypot(...v) || 1;
    const l1 = Math.min(h / 3, nu / 6), l2 = Math.min(h / 3, nv / 6);
    d += `C${(b[0] + u[0] / nu * l1).toFixed(1)} ${(b[1] + u[1] / nu * l1).toFixed(1)} ${(c[0] - v[0] / nv * l2).toFixed(1)} ${(c[1] - v[1] / nv * l2).toFixed(1)} ${c[0].toFixed(1)} ${c[1].toFixed(1)}`;
  }
  return d;
};
const trace = (a, b, t, c, w) => {
  const pts = a.map((p, i) => [X(p[0] + (b[i][0] - p[0]) * t), Y(p[1] + (b[i][1] - p[1]) * t)]);
  return `<path d="${smooth(pts)}" fill="none" stroke="${c}" stroke-width="${w}"/>`;
};
const N = 150;
for (let i = N; i >= 1; i--) out += trace(coldSecond, hotSecond, i / N, COLORS[i % 18], .7);
out += trace(coldSecond, hotSecond, 0, '#c814d8', 2.6);
for (let i = N; i >= 1; i--) out += trace(coldFirst, hotFirst, i / N, COLORS[i % 18], .7);
out += line(X(.563), Y(1.502), X(1.6), Y(1.502), '#5cb87c', 2);
out += trace(coldFirst, hotFirst, 0, '#7d14f0', 2.8);

// Axes
out += line(1075.5, Y(1.6), 1075.5, Y(.1) + .8, '#e0e0e0', 1.3);
for (let i = 10; i <= 160; i++) {
  const l = i % 10 === 0 ? 12 : i % 5 === 0 ? 8 : 5;
  out += line(1075.5 - l, Y(i / 100), 1075.5, Y(i / 100), '#cfcfcf', 1);
  if (i % 10 === 0) out += `<text x="1058" y="${(Y(i / 100) + 2.600).toFixed(1)}" text-anchor="end">${(i / 100).toFixed(1)}</text>`;
}
out += line(X(0), 652, X(1.6), 652, '#e0e0e0', 1.3);
for (let i = 0; i <= 160; i++) {
  const l = i % 10 === 0 ? 11 : i % 5 === 0 ? 8 : 4;
  out += line(X(i / 100), 652, X(i / 100), 652 + l, '#cfcfcf', 1);
  if (i % 10 === 0) out += `<text x="${X(i / 100).toFixed(1)}" y="675.500" text-anchor="middle">${(i / 100).toFixed(1)}</text>`;
}
out += '<text x="1439" y="688" text-anchor="middle">Vin</text><text transform="translate(1035 396) rotate(-90)" text-anchor="middle">V (V)</text>';
document.getElementById('plot').innerHTML = out;
```
